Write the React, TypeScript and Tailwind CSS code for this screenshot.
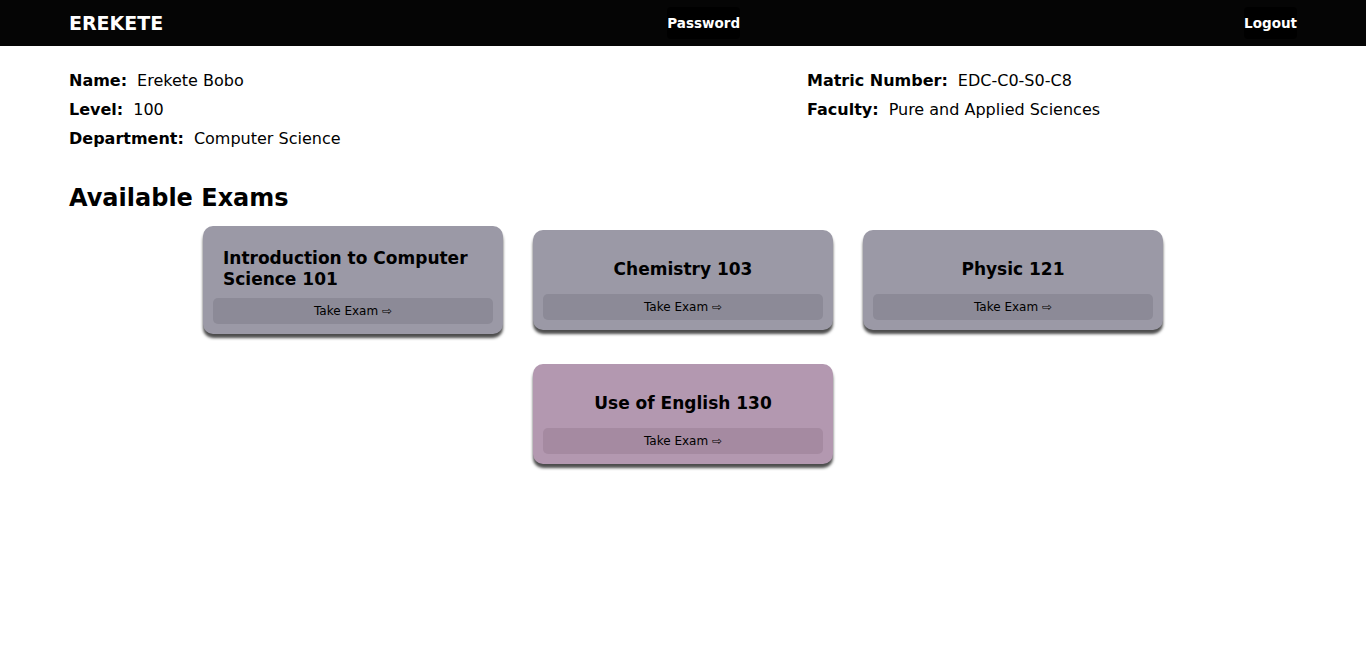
const font = { fontFamily: '"DejaVu Sans", Verdana, sans-serif' }

const student = {
  left: [
    { label: 'Name:', value: 'Erekete Bobo' },
    { label: 'Level:', value: '100' },
    { label: 'Department:', value: 'Computer Science' },
  ],
  right: [
    { label: 'Matric Number:', value: 'EDC-C0-S0-C8' },
    { label: 'Faculty:', value: 'Pure and Applied Sciences' },
  ],
}

const exams = [
  { title: 'Introduction to Computer Science 101', tone: 'gray' },
  { title: 'Chemistry 103', tone: 'gray' },
  { title: 'Physic 121', tone: 'gray' },
  { title: 'Use of English 130', tone: 'pink' },
]

function InfoRow({ label, value }: { label: string; value: string }) {
  return (
    <div className="flex gap-[10px] text-[16px] leading-[29px] text-black">
      <span className="font-bold">{label}</span>
      <span>{value}</span>
    </div>
  )
}

function ExamCard({ title, tone }: { title: string; tone: string }) {
  const pink = tone === 'pink'
  return (
    <div
      className={`w-[300px] min-h-[100px] p-[10px] flex flex-col rounded-[10px] shadow-[0_4px_3px_rgba(0,0,0,0.7)] ${
        pink ? 'bg-[#b398b0]' : 'bg-[#9b99a6]'
      }`}
    >
      <div className="flex-1 flex items-center justify-center px-[10px] pt-[12px] pb-[8px]">
        <h3 className="text-[17px] font-bold leading-[21px] text-black text-left">{title}</h3>
      </div>
      <button
        className={`h-[26px] w-full rounded-[5px] text-[12px] text-black ${
          pink ? 'bg-[#a58aa1]' : 'bg-[#8c8a97]'
        }`}
      >
        Take Exam ⇨
      </button>
    </div>
  )
}

export default function App() {
  return (
    <div className="min-h-screen bg-white" style={font}>
      <nav className="h-[46px] bg-[#050505] px-[69px] flex items-center justify-between">
        <span className="text-[19px] font-bold text-white">EREKETE</span>
        <button className="bg-black rounded-[4px] py-[6px] text-[13.5px] font-bold text-white">
          Password
        </button>
        <button className="bg-black rounded-[4px] py-[6px] text-[13.5px] font-bold text-white">
          Logout
        </button>
      </nav>

      <main className="px-[69px]">
        <div className="grid grid-cols-[738px_1fr] pt-[20px]">
          <div>
            {student.left.map((row) => (
              <InfoRow key={row.label} {...row} />
            ))}
          </div>
          <div>
            {student.right.map((row) => (
              <InfoRow key={row.label} {...row} />
            ))}
          </div>
        </div>

        <h2 className="mt-[31px] text-[24px] font-bold leading-[28px] text-black">Available Exams</h2>

        <div className="max-w-[990px] mx-auto mt-[14px] flex flex-wrap justify-center items-center gap-x-[30px] gap-y-[30px]">
          {exams.map((exam) => (
            <ExamCard key={exam.title} {...exam} />
          ))}
        </div>
      </main>
    </div>
  )
}
